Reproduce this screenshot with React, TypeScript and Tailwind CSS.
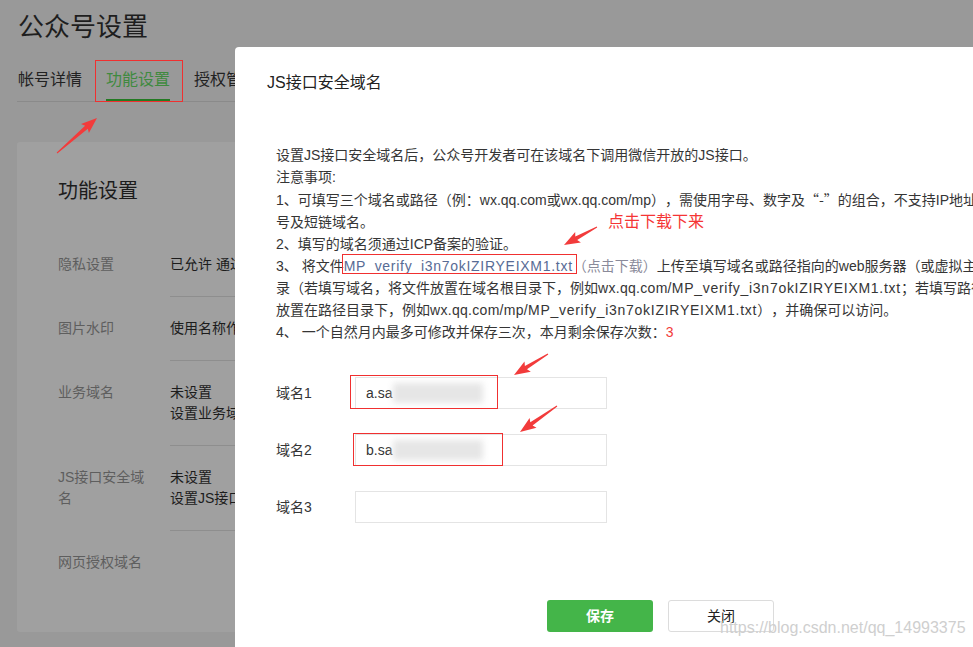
import React from "react";

type Pt = [number, number];

function arrowPoints(t: Pt, h: Pt): string {
  const dx = h[0] - t[0];
  const dy = h[1] - t[1];
  const len = Math.sqrt(dx * dx + dy * dy);
  const ux = dx / len;
  const uy = dy / len;
  const nx = -uy;
  const ny = ux;
  const L = 14;
  const W = 6;
  const bx = h[0] - ux * L;
  const by = h[1] - uy * L;
  const wx = h[0] - ux * (L + 2);
  const wy = h[1] - uy * (L + 2);
  const p = (x: number, y: number) => `${x.toFixed(1)},${y.toFixed(1)}`;
  return [
    p(t[0] + nx * 0.5, t[1] + ny * 0.5),
    p(bx + nx * 2, by + ny * 2),
    p(wx + nx * W, wy + ny * W),
    p(h[0], h[1]),
    p(wx - nx * W, wy - ny * W),
    p(bx - nx * 2, by - ny * 2),
    p(t[0] - nx * 0.5, t[1] - ny * 0.5),
  ].join(" ");
}

const arrows: [Pt, Pt][] = [
  [[57, 153], [97, 118]],
  [[597, 227], [564, 245]],
  [[548, 354], [514, 375]],
  [[557, 406], [520, 432]],
];

const rows: { label: string; lines: string[] }[] = [
  { label: "隐私设置", lines: ["已允许 通过名称搜索到本帐号"] },
  { label: "图片水印", lines: ["使用名称作为水印"] },
  { label: "业务域名", lines: ["未设置", "设置业务域名后，在微信内访问该域名下页面时，不会被重新排版"] },
  { label: "JS接口安全域名", lines: ["未设置", "设置JS接口安全域名后，公众号开发者可在该域名下调用微信开放的JS接口"] },
  { label: "网页授权域名", lines: [""] },
];

const file = "MP_verify_i3n7okIZIRYEIXM1.txt";

function File({ className = "" }: { className?: string }) {
  return <span className={"tracking-[0.72px] " + className}>{file}</span>;
}

export default function App() {
  return (
    <div className="relative w-[973px] h-[647px] overflow-hidden bg-[#999999] font-['Liberation_Sans','Noto_Sans_CJK_SC',sans-serif] [text-spacing-trim:space-all]">
      {/* background page */}
      <div className="pl-[17px]">
        <h1 className="pt-[10px] pl-[1px] text-[26px] leading-[34px] text-[#1e1e1e] font-normal">公众号设置</h1>
        <div className="mt-[16px] h-[42px] w-[1000px] border-b border-[#8a8a8a] flex gap-[24px] pl-[1px]">
          <div className="h-[41px] pt-[10px] text-[16px] leading-[20px] text-[#222222]">帐号详情</div>
          <div className="h-[41px] pt-[10px] text-[16px] leading-[20px] text-[#3f8a3f] border-b-2 border-[#237a23]">功能设置</div>
          <div className="h-[41px] pt-[10px] text-[16px] leading-[20px] text-[#222222]">授权管理</div>
        </div>
        <div className="mt-[40px] h-[490px] w-[1000px] rounded-[3px] bg-[#a0a0a0] pl-[41px] pt-[35px]">
          <div className="text-[20px] leading-[28px] text-[#1c1c1c]">功能设置</div>
          <div className="mt-[28px]">
            {rows.map((r, i) => (
              <div key={i} className="flex">
                <div className="w-[112px] pr-[16px] py-[21px] text-[14px] leading-[21px] text-[#5e5e5e]">{r.label}</div>
                <div
                  className={
                    "flex-1 py-[21px] text-[14px] leading-[21px] text-[#1c1c1c] whitespace-nowrap " +
                    (i < rows.length - 1 ? "border-b border-[#8e8e8e]" : "")
                  }
                >
                  {r.lines.map((l, j) => (
                    <div key={j} className="h-[21px]">{l}</div>
                  ))}
                </div>
              </div>
            ))}
          </div>
        </div>
      </div>

      {/* modal */}
      <div className="absolute left-[235px] top-[47px] w-[849px] h-[640px] bg-white rounded-tl-[4px] text-[#353535]">
        <div className="pt-[24px] pl-[32px] text-[16px] leading-[24px] text-[#222222]">JS接口安全域名</div>
        <div className="mt-[49px] pl-[41px] text-[14px] leading-[22px] whitespace-nowrap">
          <div>设置JS接口安全域名后，公众号开发者可在该域名下调用微信开放的JS接口。</div>
          <div>注意事项:</div>
          <div>
            1、可填写三个域名或路径（例：wx.qq.com或wx.qq.com/mp），需使用字母、数字及
            <span className="font-['Noto_Sans_CJK_SC',sans-serif]">“-”</span>
            的组合，不支持IP地址、端口
          </div>
          <div>号及短链域名。</div>
          <div>2、填写的域名须通过ICP备案的验证。</div>
          <div>
            3、 将文件<File className="text-[#576b95]" />
            <span className="text-[#8a8a9a]">（点击下载）</span>上传至填写域名或路径指向的web服务器（或虚拟主机）的目
          </div>
          <div>
            录（若填写域名，将文件放置在域名根目录下，例如<span className="tracking-[0.3px]">wx.qq.com/</span>
            <File />；若填写路径，将文件
          </div>
          <div>
            放置在路径目录下，例如<span className="tracking-[0.3px]">wx.qq.com/mp/</span>
            <File />），并确保可以访问。
          </div>
          <div>
            4、 一个自然月内最多可修改并保存三次，本月剩余保存次数：<span className="text-[#f23b3b]">3</span>
          </div>
        </div>

        <div className="mt-[34px] pl-[41px] flex flex-col gap-[25px]">
          {["域名1", "域名2", "域名3"].map((name, i) => (
            <div key={name} className="flex items-center h-[32px]">
              <div className="w-[79px] text-[14px] text-[#353535]">{name}</div>
              <div className="relative w-[252px] h-[32px] border border-[#e4e4e4] flex items-center pl-[10px] text-[14px] text-[#353535]">
                {i === 0 && <span>a.sa</span>}
                {i === 1 && <span>b.sa</span>}
                {i < 2 && <span className="ml-[1px] w-[90px] h-[20px] bg-[#e6e6e6] blur-[3px]" />}
              </div>
            </div>
          ))}
        </div>

        <div className="mt-[77px] ml-[312px] flex gap-[15px]">
          <button className="w-[106px] h-[32px] rounded-[3px] bg-[#44b549] text-white text-[14px] font-bold">保存</button>
          <button className="w-[106px] h-[32px] rounded-[3px] bg-white border border-[#dcdcdc] text-[#222222] text-[14px]">关闭</button>
        </div>
      </div>

      {/* annotations */}
      <div className="absolute left-[95px] top-[60px] w-[88px] h-[42px] border border-[#f03030]" />
      <div className="absolute left-[342px] top-[254px] w-[235px] h-[20px] border border-[#f03030]" />
      <div className="absolute left-[350px] top-[375px] w-[148px] h-[34px] border border-[#f03030]" />
      <div className="absolute left-[353px] top-[433px] w-[150px] h-[33px] border border-[#f03030]" />
      <div className="absolute left-[608px] top-[211px] text-[16px] leading-[22px] text-[#f53535]">点击下载下来</div>
      <svg className="absolute left-0 top-0 pointer-events-none" width="973" height="647">
        {arrows.map((a, i) => (
          <polygon key={i} points={arrowPoints(a[0], a[1])} fill="#f23b3b" />
        ))}
      </svg>
      <div className="absolute left-[720px] top-[618px] text-[16px] leading-[20px] text-[#cfcfcf] font-['Liberation_Sans',sans-serif]">
        https://blog.csdn.net/qq_14993375
      </div>
    </div>
  );
}
